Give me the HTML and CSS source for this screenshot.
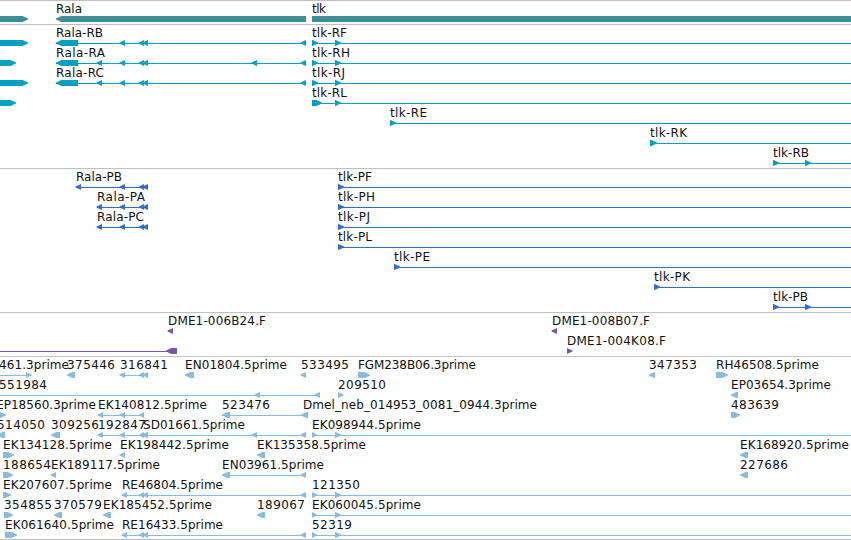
FILE: index.html
```html
<!DOCTYPE html>
<html lang="en">
<head>
  <meta charset="UTF-8">
  <title>Rala / tlk region</title>
  <link rel="stylesheet" href="styles.css">
</head>
<body>
  <div class="browser">
    <div class="track gene" data-track="gene"></div>
    <div class="track transcript" data-track="transcript"></div>
    <div class="track protein" data-track="protein"></div>
    <div class="track bac" data-track="bac"></div>
    <div class="track est" data-track="est"></div>
  </div>
  <script src="tracks.js"></script>
</body>
</html>
```
FILE: styles.css
```css
body {
  margin: 0;
  background: #fff;
  overflow: hidden;
}

.browser {
  width: 851px;
  height: 540px;
  overflow: hidden;
}

.track {
  border-top: 1px solid #c0c0c0;
  padding-bottom: 3px;
}

.row {
  display: block;
  width: 851px;
  height: 20px;
  overflow: visible;
  fill: currentColor;
}

.row text {
  font-family: "DejaVu Sans", sans-serif;
  font-size: 12px;
  fill: #111;
}

.gene {
  color: #3d8e95;
}

.transcript {
  color: #00a0c0;
}

.protein {
  color: #316dd1;
}

.bac {
  color: #7859a8;
}

.est {
  color: #88bbdd;
  padding-bottom: 2px;
  border-bottom: 1px solid #c0c0c0;
}
```
FILE: tracks.js
```js
const WIDTH = 851;
const END = WIDTH + 10;

// feature: [label, label start, label end, strand, exons]
const tlk = [[312, 318], [335, 341], [END, END + 5]];
const tlkEst = [[312, 317], [335, 341], [END, END + 5]];

const tracks = {
  gene: [
    [["", 0, 0, "+", [[-9, 28]]], ["Rala", 56, 82, "-", [[56, 306]]], ["tlk", 312, 326, "+", [[312, END]]]]
  ],
  transcript: [
    [["", 0, 0, "+", [[-9, 28]]],
     ["Rala-RB", 56, 103, "-", [[56, 78], [119.5, 125], [139, 144], [142.5, 148], [300.5, 306]]],
     ["tlk-RF", 312, 347, "+", tlk]],
    [["", 0, 0, "+", [[-9, 16]]],
     ["Rala-RA", 56, 105, "-", [[56, 78], [96.5, 102], [119.5, 125], [139, 144], [142.5, 148], [251.5, 257], [300.5, 306]]],
     ["tlk-RH", 312, 350, "+", tlk]],
    [["", 0, 0, "+", [[-9, 28]]],
     ["Rala-RC", 56, 104, "-", [[56, 78], [96.5, 102], [119.5, 125], [139, 144], [142.5, 148], [300.5, 306]]],
     ["tlk-RJ", 312, 345, "+", tlk]],
    [["", 0, 0, "+", [[-9, 16]]],
     ["tlk-RL", 312, 347, "+", [[312, 322], [335, 341], [END, END + 5]]]],
    [["tlk-RE", 390, 427, "+", [[390, 396], [END, END + 5]]]],
    [["tlk-RK", 650, 687, "+", [[650, 657], [END, END + 5]]]],
    [["tlk-RB", 773, 809, "+", [[773, 779], [805, 811], [END, END + 5]]]]
  ],
  protein: [
    [["Rala-PB", 76, 122, "-", [[75.5, 81], [119.5, 125], [139, 144], [142.5, 148]]],
     ["tlk-PF", 338, 372, "+", [[338, 344], [END, END + 5]]]],
    [["Rala-PA", 97, 145, "-", [[96.5, 102], [119.5, 125], [139, 144], [142.5, 148]]],
     ["tlk-PH", 338, 375, "+", [[338, 344], [END, END + 5]]]],
    [["Rala-PC", 97, 144, "-", [[96.5, 102], [119.5, 125], [139, 144], [142.5, 148]]],
     ["tlk-PJ", 338, 370, "+", [[338, 344], [END, END + 5]]]],
    [["tlk-PL", 338, 372, "+", [[338, 344], [END, END + 5]]]],
    [["tlk-PE", 394, 430, "+", [[394, 400], [END, END + 5]]]],
    [["tlk-PK", 654, 690, "+", [[654, 660], [END, END + 5]]]],
    [["tlk-PB", 773, 808, "+", [[773, 779], [805, 811], [END, END + 5]]]]
  ],
  bac: [
    [["DME1-006B24.F", 168, 266, "-", [[167.5, 173]]],
     ["DME1-008B07.F", 552, 650, "-", [[551.5, 557]]]],
    [["", 0, 0, "-", [[-9, -4], [166, 177]]],
     ["DME1-004K08.F", 567, 666, "+", [[567, 572.5]]]]
  ],
  est: [
    [["461.3prime", -1, 69, "+", [[-9, -4], [26, 31.5]]],
     ["375446", 67, 115, "-", [[67, 75]]],
     ["316841", 120, 168, "-", [[119.5, 125], [139, 144], [142.5, 148]]],
     ["EN01804.5prime", 185, 287, "-", [[185, 194]]],
     ["533495", 301, 349, "-", [[300.5, 306]]],
     ["FGM238B06.3prime", 358, 476, "+", [[358, 370]]],
     ["347353", 649, 697, "-", [[649, 655]]],
     ["RH46508.5prime", 716, 819, "+", [[716, 728]]]],
    [["551984", -1, 47, "-", [[-9, -4], [254.5, 260], [314.5, 320]]],
     ["209510", 338, 386, "+", [[338, 343.5]]],
     ["EP03654.3prime", 731, 831, "-", [[731, 738]]]],
    [["EP18560.3prime", -4, 96, "+", [[-5, 6]]],
     ["EK140812.5prime", 98, 207, "-", [[97.5, 103], [119.5, 125], [139, 144]]],
     ["523476", 222, 270, "-", [[222, 230], [301, 308]]],
     ["Dmel_neb_014953_0081_0944.3prime", 303, 537, "-", []],
     ["483639", 731, 779, "+", [[731, 740]]]],
    [["514050", -3, 45, "-", [[-3, 5]]],
     ["309256", 51, 99, "-", [[51, 60]]],
     ["192847", 98, 146, "-", [[97.5, 103], [119.5, 125], [139, 144], [142.5, 148]]],
     ["SD01661.5prime", 143, 245, "-", [[142.5, 148], [251.5, 257], [300.5, 306]]],
     ["EK098944.5prime", 312, 421, "+", tlkEst]],
    [["EK134128.5prime", 3, 112, "+", [[3, 14]]],
     ["EK198442.5prime", 120, 229, "-", [[119.5, 125]]],
     ["EK135358.5prime", 257, 366, "-", [[257, 265]]],
     ["EK168920.5prime", 740, 849, "-", [[740, 748]]]],
    [["188654", 3, 51, "+", [[3, 13]]],
     ["EK189117.5prime", 51, 160, "-", [[50.5, 56]]],
     ["EN03961.5prime", 222, 324, "-", [[222, 230], [300.5, 306]]],
     ["227686", 740, 788, "-", [[740, 748]]]],
    [["EK207607.5prime", 3, 112, "+", [[3, 11]]],
     ["RE46804.5prime", 122, 223, "-", [[121.5, 127], [139, 144], [142.5, 148], [300.5, 306]]],
     ["121350", 312, 360, "+", tlkEst]],
    [["354855", 4, 52, "+", [[4, 13]]],
     ["370579", 54, 102, "-", [[54, 62]]],
     ["EK185452.5prime", 103, 212, "-", [[103, 111]]],
     ["189067", 257, 305, "-", [[257, 265]]],
     ["EK060045.5prime", 312, 421, "+", tlkEst]],
    [["EK061640.5prime", 5, 114, "+", [[5, 17]]],
     ["RE16433.5prime", 122, 223, "-", [[121.5, 127], [139, 144], [142.5, 148], [300.5, 306]]],
     ["52319", 312, 352, "+", tlkEst]]
  ]
};

// box with an arrowhead on the strand's end
function exon(a, b, strand) {
  const head = Math.min(b - a, 5.5);
  const tip = strand === "+" ? b : a;
  const back = strand === "+" ? a : b;
  const neck = strand === "+" ? b - head : a + head;
  return `<polygon points="${back},15 ${neck},15 ${tip},17.6 ${tip},18.6 ${neck},21 ${back},21"/>`;
}

function feature([label, start, end, strand, exons]) {
  let out = "";
  if (exons.length > 1) {
    const a = Math.round(exons[0][0]);
    const b = exons[exons.length - 1][1];
    out += `<rect x="${a}" y="18" width="${b - a}" height="1"/>`;
  }
  out += exons.map(e => exon(e[0], e[1], strand)).join("");
  if (label) {
    out += `<text x="${start}" y="12" textLength="${end - start}">${label}</text>`;
  }
  return out;
}

document.querySelectorAll(".track").forEach(track => {
  track.innerHTML = tracks[track.dataset.track]
    .map(row => `<svg class="row">${row.map(feature).join("")}</svg>`)
    .join("");
});
```
